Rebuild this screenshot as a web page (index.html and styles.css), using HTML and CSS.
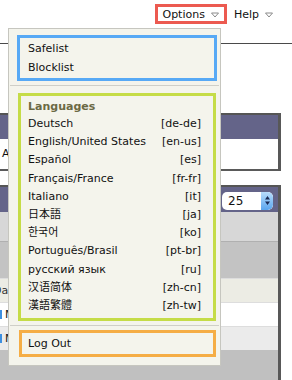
FILE: index.html
```html
<!DOCTYPE html>
<html lang="en">
<head>
  <meta charset="UTF-8">
  <title>Options menu</title>
  <link rel="stylesheet" href="styles.css">
</head>
<body>

<div class="topbar">
  <div class="nav">
    <span class="nav-item nav-options">Options <svg class="caret" width="8" height="6" viewBox="0 0 8 6"><path d="M0.5 1 L7.5 1 L4 5 Z" fill="none" stroke="#8a8a8a" stroke-width="1"/></svg></span>
    <span class="nav-item">Help <svg class="caret" width="8" height="6" viewBox="0 0 8 6"><path d="M0.5 1 L7.5 1 L4 5 Z" fill="none" stroke="#8a8a8a" stroke-width="1"/></svg></span>
  </div>
</div>

<div class="panel panel-top">
  <div class="panel-head"></div>
  <div class="panel-body">All Spam</div>
</div>

<div class="panel panel-list">
  <div class="panel-head">
    <div class="select"><span>25</span><span class="stepper"><svg width="7" height="11" viewBox="0 0 7 11"><path d="M3.5 1 L6 4.5 L1 4.5 Z M3.5 10 L6 6.5 L1 6.5 Z" fill="#1a2a55"/></svg></span></div>
  </div>
  <div class="row row-a"></div>
  <div class="row row-b"></div>
  <div class="row row-c"><span class="cut">Date</span></div>
  <div class="row row-d"><span class="check"></span>M</div>
  <div class="row row-e"><span class="check"></span>M</div>
  <div class="row row-f"></div>
</div>

<div class="menu">
  <div class="box box-blue">
    <div class="item">Safelist</div>
    <div class="item">Blocklist</div>
  </div>
  <div class="sep"></div>
  <div class="box box-green">
    <div class="menu-title">Languages</div>
    <div class="lang"><span>Deutsch</span><span>[de-de]</span></div>
    <div class="lang"><span>English/United States</span><span>[en-us]</span></div>
    <div class="lang"><span>Español</span><span>[es]</span></div>
    <div class="lang"><span>Français/France</span><span>[fr-fr]</span></div>
    <div class="lang"><span>Italiano</span><span>[it]</span></div>
    <div class="lang"><span lang="ja" class="cjk-jp">日本語</span><span>[ja]</span></div>
    <div class="lang"><span lang="ko" class="cjk-kr">한국어</span><span>[ko]</span></div>
    <div class="lang"><span>Português/Brasil</span><span>[pt-br]</span></div>
    <div class="lang"><span>русский язык</span><span>[ru]</span></div>
    <div class="lang"><span lang="zh-CN" class="cjk-sc">汉语简体</span><span>[zh-cn]</span></div>
    <div class="lang"><span lang="zh-TW" class="cjk-tc">漢語繁體</span><span>[zh-tw]</span></div>
  </div>
  <div class="sep sep-last"></div>
  <div class="box box-orange">
    <div class="item">Log Out</div>
  </div>
</div>

</body>
</html>
```

FILE: styles.css
```css
body {
  margin: 0;
  font-family: "DejaVu Sans", Verdana, sans-serif;
  font-size: 11px;
  color: #111;
  background: #fff;
  position: relative;
  height: 380px;
  overflow: hidden;
}
.topbar {
  height: 43px;
  border-bottom: 1px solid #4a4a4a;
}
.nav {
  display: flex;
  justify-content: flex-end;
  align-items: center;
  gap: 7px;
  padding: 4px 19px 0 0;
}
.nav-item {
  display: flex;
  align-items: center;
  height: 20px;
  font-size: 11px;
}
.nav-options {
  border: 3px solid #ec5a50;
  padding: 0 5px 0 4px;
  height: 14px;
}
.caret {
  margin-left: 6px;
  margin-top: 2px;
}

/* page behind the menu */
.panel {
  width: 278px;
  border-right: 3px solid #585858;
}
.panel-top {
  margin-top: 69px;
}
.panel-head {
  background: #646489;
  border-top: 2px solid #555;
  height: 24px;
}
.panel-top .panel-body {
  height: 30px;
  line-height: 30px;
  padding-left: 2px;
  border-bottom: 2px solid #5a5a5a;
}
.panel-list {
  margin-top: 14px;
}
.panel-list .panel-head {
  height: 25px;
  display: flex;
  justify-content: flex-end;
  align-items: center;
  padding-right: 5px;
}
.select {
  width: 51px;
  height: 18px;
  background: #fff;
  border-radius: 5px;
  display: flex;
  justify-content: space-between;
  align-items: center;
  box-sizing: border-box;
  padding-left: 6px;
  font-size: 12px;
  overflow: hidden;
  margin-top: 2px;
}
.stepper {
  width: 12px;
  height: 18px;
  background: linear-gradient(#b8dcfb, #5aa5ee);
  display: flex;
  align-items: center;
  justify-content: center;
  border-radius: 0 5px 5px 0;
}
.row {
  font-size: 11px;
  display: flex;
  align-items: center;
  overflow: hidden;
}
.row-a { height: 29px; background: #d7d7d7; border-bottom: 1px solid #b0b0b0; }
.row-b { height: 36px; background: #c3c3c3; }
.row-c { height: 23px; background: #ececE4; border-top: 1px solid #ddd; }
.row-d { height: 23px; background: #fff; border-top: 1px solid #ddd; }
.row-e { height: 23px; background: #ebebeb; border-top: 1px solid #ddd; }
.row-f { height: 40px; background: #c0c0c0; }
.cut {
  margin-left: -7px;
  color: #333;
}
.check {
  width: 2px;
  height: 9px;
  background: #3d8fe0;
  margin: 0 3px 0 0;
}

/* dropdown */
.menu {
  position: absolute;
  left: 8px;
  top: 28px;
  width: 211px;
  background: #f4f4ec;
  border: 1px solid #c6c6bf;
  padding: 6px 0 8px 0;
}
.box {
  border: 3px solid;
}
.box-blue {
  border-color: #57a9f5;
  margin: 0 3px 0 8px;
  padding: 1px 0;
}
.box-green {
  border-color: #c5dc47;
  margin: 0 4px 0 9px;
  padding: 2px 12px 3px 0;
}
.box-orange {
  border-color: #f5ad45;
  margin: 0 4px 0 10px;
  padding: 1px 0;
}
.item {
  line-height: 19px;
  padding-left: 8px;
}
.box-orange .item {
  padding-left: 6px;
}
.sep {
  height: 1px;
  background: #cfcfc8;
  margin: 4px 1px 7px 1px;
}
.sep-last {
  margin-bottom: 4px;
}
.menu-title {
  line-height: 17px;
  padding-left: 7px;
  font-weight: bold;
  color: #6b6944;
}
.lang {
  display: flex;
  justify-content: space-between;
  line-height: 18.2px;
  height: 18.2px;
  padding-left: 7px;
}
.cjk-jp { font-family: "DejaVu Sans", "Noto Sans CJK JP", sans-serif; }
.cjk-kr { font-family: "DejaVu Sans", "Noto Sans CJK KR", sans-serif; }
.cjk-sc { font-family: "DejaVu Sans", "Noto Sans CJK SC", sans-serif; }
.cjk-tc { font-family: "DejaVu Sans", "Noto Sans CJK TC", sans-serif; }
```
